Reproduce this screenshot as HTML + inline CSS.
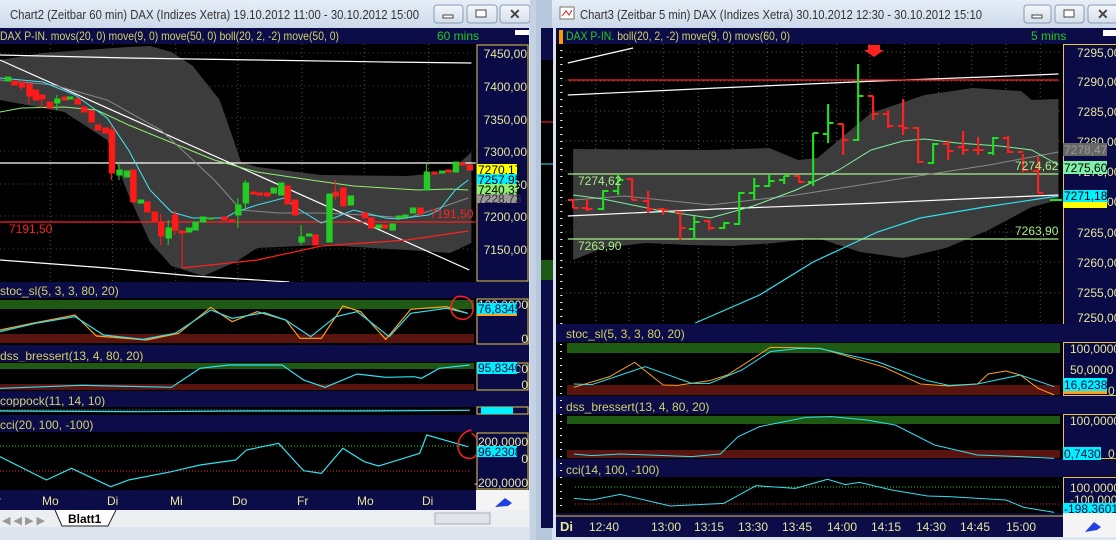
<!DOCTYPE html>
<html><head><meta charset="utf-8"><style>
html,body{margin:0;padding:0;width:1116px;height:540px;overflow:hidden;background:#d6e0ec;font-family:"Liberation Sans",sans-serif}
svg{position:absolute;left:0;top:0}
text{font-family:"Liberation Sans",sans-serif}
</style></head><body>
<svg width="1116" height="540" viewBox="0 0 1116 540">
<defs>
<linearGradient id="tb" x1="0" y1="0" x2="0" y2="1"><stop offset="0" stop-color="#e6eef8"/><stop offset="1" stop-color="#cdd9ea"/></linearGradient>
<linearGradient id="btn" x1="0" y1="0" x2="0" y2="1"><stop offset="0" stop-color="#f4f7fb"/><stop offset="1" stop-color="#d4deec"/></linearGradient>
</defs>
<rect x="0" y="0" width="1116" height="540" fill="#d8e2ee"/>

<!-- ============ LEFT WINDOW ============ -->
<rect x="0" y="0" width="536" height="28" fill="url(#tb)"/>
<text x="10" y="19" font-size="13" fill="#333" textLength="409" lengthAdjust="spacingAndGlyphs">Chart2 (Zeitbar 60 min)  DAX (Indizes Xetra) 19.10.2012 11:00 - 30.10.2012 15:00</text>
<rect x="434" y="5" width="29" height="18" rx="3" fill="url(#btn)" stroke="#8a9ab0"/>
<rect x="443" y="15" width="10" height="3" fill="#fff" stroke="#444" stroke-width="1"/>
<rect x="467" y="5" width="30" height="18" rx="3" fill="url(#btn)" stroke="#8a9ab0"/>
<rect x="476" y="10" width="10" height="7" fill="#fff" stroke="#444"/>
<rect x="500" y="5" width="30" height="18" rx="3" fill="url(#btn)" stroke="#8a9ab0"/>
<text x="509" y="19" font-size="14" fill="#444" font-weight="bold">✕</text>
<rect x="530" y="0" width="6" height="540" fill="#c4d2e4"/>

<rect x="0" y="28" width="529" height="16" fill="#0c0c48"/>
<text x="0" y="40" font-size="12" fill="#d2d26a" textLength="339" lengthAdjust="spacingAndGlyphs">DAX P-IN. movs(20, 0) move(9, 0) move(50, 0) boll(20, 2, -2) move(50, 0)</text>
<text x="437" y="40" font-size="12" fill="#22cc22">60 mins</text>
<rect x="515" y="30" width="14" height="5" fill="#fff"/>
<rect x="0" y="44" width="476" height="238" fill="#000"/>
<rect x="476" y="44" width="53" height="238" fill="#0a0a46"/>
<rect x="477" y="45" width="51" height="236" fill="none" stroke="#e8c840" stroke-width="1"/>
<g font-size="12" fill="#e6e69c" text-anchor="end">
<text x="527" y="58">7450,00</text><text x="527" y="91">7400,00</text><text x="527" y="124">7350,00</text><text x="527" y="156">7300,00</text><text x="527" y="189">7250,00</text><text x="527" y="221">7200,00</text><text x="527" y="254">7150,00</text>
</g>
<g transform="scale(1.0714 1)">
<g stroke="#3a5a3a" stroke-dasharray="1 3" stroke-width="1">
<line x1="47" y1="44" x2="47" y2="282"/><line x1="105" y1="44" x2="105" y2="282"/><line x1="164" y1="44" x2="164" y2="282"/><line x1="222" y1="44" x2="222" y2="282"/><line x1="282" y1="44" x2="282" y2="282"/><line x1="340" y1="44" x2="340" y2="282"/><line x1="400" y1="44" x2="400" y2="282"/>
<line x1="0" y1="53" x2="444" y2="53" stroke="#444"/><line x1="0" y1="86" x2="444" y2="86" stroke="#444"/><line x1="0" y1="118" x2="444" y2="118" stroke="#444"/><line x1="0" y1="151" x2="444" y2="151" stroke="#444"/><line x1="0" y1="184" x2="444" y2="184" stroke="#444"/><line x1="0" y1="216" x2="444" y2="216" stroke="#444"/><line x1="0" y1="249" x2="444" y2="249" stroke="#444"/>
</g>
<polygon fill="#3c3c3c" points="0,60 40,53 120,47 140,46 160,52 180,66 205,100 218,140 225,162 240,167 300,175 380,176 420,172 440,152 440,243 420,253 380,250 300,245 240,248 220,262 190,276 160,266 140,242 120,195 100,140 60,112 0,100"/>
<polyline fill="none" stroke="#fff" stroke-width="1.2" points="0,55 120,58 240,60 360,62 440,63"/>
<polyline fill="none" stroke="#fff" stroke-width="1.2" points="0,260 100,268 180,276 270,282"/>
<line x1="0" y1="163" x2="444" y2="163" stroke="#fff" stroke-width="1.2"/>
<line x1="0" y1="60" x2="438" y2="270" stroke="#fff" stroke-width="1.2"/>
<line x1="0" y1="222" x2="444" y2="222" stroke="#ff2020" stroke-width="1.2"/>
<polyline fill="none" stroke="#ff2020" stroke-width="1.2" points="170,268 240,260 300,246 380,240 437,231"/>
<polyline fill="none" stroke="#90ee70" stroke-width="1" points="0,112 20,108 60,107 90,110 120,125 200,160 240,172 290,180 330,186 390,190 420,189 437,190"/>
<polyline fill="none" stroke="#888" stroke-width="1" points="0,80 50,85 100,100 150,130 200,180 225,210 260,213 300,213 340,215 380,218 410,208 437,198"/>
<polyline fill="none" stroke="#40e0f0" stroke-width="1" points="0,78 40,82 70,95 100,118 120,150 140,190 160,212 180,218 210,218 220,212 240,205 265,198 280,210 300,223 330,210 360,218 372,219 385,217 400,215 410,210 425,190 437,180"/>
<g stroke-width="1">
<g fill="#ff1a1a" stroke="#ff1a1a">
<rect x="11" y="81" width="5" height="4"/><rect x="18" y="82" width="5" height="5"/><line x1="20" y1="82" x2="20" y2="90"/><rect x="25" y="84" width="5" height="12"/><line x1="27" y1="84" x2="27" y2="104"/><rect x="31" y="90" width="5" height="10"/><rect x="37" y="95" width="5" height="4"/><line x1="39" y1="95" x2="39" y2="108"/><rect x="44" y="102" width="5" height="6"/><rect x="58" y="97" width="5" height="3"/><rect x="70" y="99" width="5" height="5"/><rect x="76" y="107" width="5" height="5"/><rect x="83" y="111" width="5" height="11"/><rect x="89" y="125" width="5" height="5"/><rect x="96" y="128" width="5" height="5"/><rect x="102" y="130" width="5" height="43"/><line x1="104" y1="125" x2="104" y2="180"/><rect x="122" y="170" width="5" height="32"/><rect x="135" y="202" width="5" height="10"/><rect x="142" y="212" width="5" height="10"/><rect x="148" y="223" width="5" height="13"/><line x1="150" y1="214" x2="150" y2="245"/><rect x="161" y="215" width="5" height="15"/><line x1="163" y1="210" x2="163" y2="235"/><line x1="170" y1="232" x2="170" y2="268"/><rect x="167" y="231" width="6" height="2"/><rect x="207" y="217" width="5" height="3"/><rect x="214" y="220" width="5" height="2"/><rect x="234" y="192" width="5" height="2"/><rect x="240" y="193" width="5" height="2"/><rect x="247" y="193" width="5" height="3"/><rect x="266" y="186" width="5" height="18"/><rect x="273" y="200" width="5" height="15"/><rect x="292" y="235" width="5" height="10"/><rect x="311" y="192" width="5" height="4"/><line x1="313" y1="180" x2="313" y2="200"/><rect x="318" y="188" width="5" height="18"/><rect x="338" y="213" width="5" height="5"/><rect x="344" y="218" width="5" height="10"/><rect x="357" y="225" width="5" height="3"/><rect x="390" y="208" width="5" height="6"/><rect x="403" y="172" width="5" height="2"/><rect x="416" y="170" width="5" height="2"/><rect x="429" y="163" width="5" height="2"/><rect x="436" y="165" width="5" height="5"/>
</g>
<g fill="#22cc22" stroke="#22cc22">
<rect x="5" y="77" width="5" height="4"/><rect x="51" y="99" width="5" height="4"/><line x1="53" y1="95" x2="53" y2="110"/><rect x="63" y="97" width="5" height="2"/><rect x="109" y="170" width="5" height="5"/><line x1="111" y1="163" x2="111" y2="180"/><rect x="116" y="171" width="5" height="6"/><rect x="129" y="200" width="5" height="3"/><rect x="155" y="228" width="5" height="10"/><line x1="157" y1="220" x2="157" y2="245"/><rect x="174" y="228" width="5" height="4"/><rect x="180" y="222" width="5" height="8"/><rect x="187" y="217" width="5" height="5"/><rect x="194" y="218" width="5" height="1"/><rect x="220" y="205" width="5" height="10"/><line x1="222" y1="198" x2="222" y2="228"/><rect x="227" y="183" width="5" height="20"/><line x1="229" y1="180" x2="229" y2="210"/><rect x="253" y="188" width="5" height="5"/><rect x="260" y="183" width="5" height="12"/><rect x="279" y="237" width="5" height="5"/><line x1="281" y1="225" x2="281" y2="245"/><rect x="286" y="234" width="5" height="2"/><rect x="305" y="194" width="5" height="48"/><rect x="325" y="196" width="5" height="9"/><rect x="351" y="225" width="5" height="3"/><rect x="364" y="224" width="5" height="6"/><rect x="370" y="216" width="5" height="2"/><rect x="376" y="215" width="5" height="2"/><rect x="383" y="208" width="5" height="5"/><rect x="396" y="172" width="5" height="18"/><line x1="398" y1="163" x2="398" y2="190"/><rect x="410" y="171" width="5" height="2"/><rect x="423" y="162" width="5" height="10"/>
</g></g>
</g>
<text x="9" y="233" font-size="12" fill="#ff2020">7191,50</text>
<text x="430" y="218" font-size="12" fill="#ff2020">7191,50</text>
<rect x="477" y="164" width="40" height="11" fill="#ffff00"/><text x="478" y="174" font-size="12" fill="#000">7270,17</text>
<rect x="477" y="174" width="40" height="11" fill="#00f0ff"/><text x="478" y="184" font-size="12" fill="#000">7257,95</text>
<rect x="477" y="184" width="40" height="11" fill="#90ee70"/><text x="478" y="194" font-size="12" fill="#000">7240,33</text>
<rect x="477" y="194" width="40" height="9" fill="#999"/><text x="478" y="203" font-size="12" fill="#333">7228,73</text>

<rect x="0" y="282" width="529" height="208" fill="#0c0c48"/>
<g font-size="12" fill="#d2d26a"><text x="0" y="295">stoc_sl(5, 3, 3, 80, 20)</text><text x="0" y="360">dss_bressert(13, 4, 80, 20)</text><text x="0" y="405">coppock(11, 14, 10)</text><text x="0" y="429">cci(20, 100, -100)</text></g>
<rect x="0" y="298" width="476" height="47" fill="#000"/>
<rect x="0" y="300" width="474" height="9" fill="#1e5a14"/><rect x="0" y="334" width="474" height="9" fill="#5a1410"/>
<rect x="0" y="362" width="476" height="29" fill="#000"/>
<rect x="0" y="363" width="474" height="6" fill="#1e5a14"/><rect x="0" y="384" width="474" height="6" fill="#5a1410"/>
<rect x="0" y="407" width="476" height="8" fill="#000"/><line x1="0" y1="410" x2="470" y2="410" stroke="#555" stroke-dasharray="2 1"/>
<rect x="0" y="432" width="476" height="58" fill="#000"/>
<line x1="0" y1="446" x2="470" y2="446" stroke="#22dd22" stroke-dasharray="1 2"/>
<line x1="0" y1="471" x2="470" y2="471" stroke="#ff2020" stroke-dasharray="1 2"/>
<g transform="translate(0 280) scale(0.35714 0.33333)" fill="none" stroke-width="1.2">
<polyline vector-effect="non-scaling-stroke" stroke="#ffa020" points="0,150 90,130 210,105 270,168 410,180 500,160 590,82 650,125 720,95 800,120 840,175 900,175 960,78 1010,95 1080,178 1150,88 1250,80 1310,100"/>
<polyline vector-effect="non-scaling-stroke" stroke="#30e0f0" points="0,155 100,130 210,110 290,165 400,178 490,160 590,90 650,115 740,98 800,120 870,170 940,110 1000,95 1090,170 1150,100 1250,85 1310,100"/>
<polyline vector-effect="non-scaling-stroke" stroke="#30e0f0" points="0,325 230,316 480,322 560,265 640,255 790,255 850,300 910,322 1000,282 1080,292 1160,290 1180,295 1230,265 1315,255"/>
<polyline vector-effect="non-scaling-stroke" stroke="#30e0f0" points="0,393 400,395 700,393 1000,393 1315,391"/>
<polyline vector-effect="non-scaling-stroke" stroke="#30e0f0" points="0,530 130,600 200,565 310,620 360,600 480,575 560,555 660,540 690,510 780,490 850,572 900,580 960,505 1020,545 1060,558 1130,535 1175,520 1195,465 1310,500"/>
<path vector-effect="non-scaling-stroke" stroke="#ff2020" stroke-width="1.5" d="M1280,50 C1330,40 1340,110 1300,118 C1260,120 1250,70 1280,50"/>
<path vector-effect="non-scaling-stroke" stroke="#ff2020" stroke-width="1.5" d="M1320,450 C1270,460 1270,540 1320,535 C1345,530 1345,470 1320,460"/>
</g>
<rect x="476" y="298" width="53" height="47" fill="#0a0a46"/><rect x="477" y="299" width="51" height="45" fill="none" stroke="#e8c840"/>
<rect x="476" y="362" width="53" height="29" fill="#0a0a46"/><rect x="477" y="363" width="51" height="27" fill="none" stroke="#e8c840"/>
<rect x="476" y="407" width="53" height="8" fill="#0a0a46"/><rect x="477" y="407" width="51" height="7" fill="none" stroke="#e8c840"/>
<rect x="476" y="432" width="53" height="58" fill="#0a0a46"/><rect x="477" y="433" width="51" height="56" fill="none" stroke="#e8c840"/>
<g font-size="12" fill="#e6e69c" text-anchor="end"><text x="528" y="309">100,0000</text><text x="528" y="343">0</text><text x="528" y="373">100</text><text x="528" y="389">0</text><text x="528" y="446">200,0000</text><text x="528" y="463">0</text><text x="528" y="487">-200,0000</text></g>
<rect x="477" y="306" width="40" height="10" fill="#ffa020"/><rect x="477" y="303" width="40" height="11" fill="#00f0ff"/><text x="478" y="313" font-size="12" fill="#0a0a46">76,8345</text>
<rect x="477" y="362" width="40" height="12" fill="#00f0ff"/><text x="478" y="372" font-size="12" fill="#0a0a46">95,8346</text>
<rect x="481" y="407" width="32" height="7" fill="#00f0ff"/>
<rect x="477" y="446" width="40" height="11" fill="#00f0ff"/><text x="478" y="456" font-size="12" fill="#0a0a46">96,2308</text>
<rect x="0" y="490" width="476" height="20" fill="#0c0c48"/>
<g font-size="12" fill="#e6e69c"><text x="-3" y="505">r</text><text x="42" y="505">Mo</text><text x="107" y="505">Di</text><text x="170" y="505">Mi</text><text x="232" y="505">Do</text><text x="297" y="505">Fr</text><text x="357" y="505">Mo</text><text x="422" y="505">Di</text></g>
<rect x="476" y="490" width="53" height="20" fill="#f4f4f4"/>
<path d="M495,507 L505,498 L512,503 L508,506 Z" fill="#2040e0"/>
<rect x="0" y="510" width="529" height="17" fill="#eceef2"/>
<text x="2" y="524" font-size="11" fill="#999">◀ ◀ ▶ ▶</text>
<path d="M55,510 L62,526 L108,526 L116,510" fill="#fff" stroke="#222"/>
<text x="68" y="523" font-size="12" font-weight="bold" fill="#000">Blatt1</text>
<rect x="435" y="513" width="55" height="11" fill="#e0e4ea" stroke="#aab"/>
<rect x="0" y="527" width="529" height="13" fill="#dbe4ef"/>
<rect x="536" y="0" width="16" height="540" fill="#b7c7dc"/>
<rect x="541" y="28" width="12" height="500" fill="#0c0c48"/>
<rect x="541" y="60" width="12" height="200" fill="#000"/>
<line x1="541" y1="122" x2="553" y2="122" stroke="#ff2020"/>
<line x1="541" y1="164" x2="553" y2="164" stroke="#30e0f0"/>
<rect x="541" y="260" width="12" height="20" fill="#1e5a14"/>

<!-- ============ RIGHT WINDOW ============ -->
<rect x="552" y="0" width="564" height="28" fill="url(#tb)"/>
<rect x="560" y="7" width="14" height="12" fill="#fff" stroke="#776"/><path d="M562,16 L566,11 L569,15 L572,10" stroke="#d02020" fill="none"/>
<text x="580" y="19" font-size="13" fill="#333" textLength="402" lengthAdjust="spacingAndGlyphs">Chart3 (Zeitbar 5 min)  DAX (Indizes Xetra) 30.10.2012 12:30 - 30.10.2012 15:10</text>
<rect x="1024" y="5" width="27" height="18" rx="3" fill="url(#btn)" stroke="#8a9ab0"/>
<rect x="1032" y="15" width="10" height="3" fill="#fff" stroke="#444"/>
<rect x="1055" y="5" width="29" height="18" rx="3" fill="url(#btn)" stroke="#8a9ab0"/>
<rect x="1064" y="10" width="10" height="7" fill="#fff" stroke="#444"/>
<rect x="1088" y="5" width="30" height="18" rx="3" fill="url(#btn)" stroke="#8a9ab0"/>
<text x="1097" y="19" font-size="14" fill="#444" font-weight="bold">✕</text>

<rect x="556" y="28" width="560" height="16" fill="#0c0c48"/>
<rect x="559" y="30" width="4" height="14" fill="#ff9a00"/>
<text x="566" y="40" font-size="12" textLength="224" lengthAdjust="spacingAndGlyphs"><tspan fill="#22cc22">DAX P-IN. </tspan><tspan fill="#d2d26a">boll(20, 2, -2) move(9, 0) movs(60, 0)</tspan></text>
<text x="1031" y="40" font-size="12" fill="#22cc22">5 mins</text>
<rect x="1103" y="30" width="13" height="6" fill="#fff"/>
<rect x="556" y="44" width="507" height="280" fill="#000"/>
<rect x="1063" y="44" width="53" height="280" fill="#0a0a46"/>
<line x1="1063.5" y1="44" x2="1063.5" y2="324" stroke="#e8c840"/><line x1="1063" y1="44.5" x2="1116" y2="44.5" stroke="#e8c840"/>
<g font-size="12" fill="#e6e69c"><text x="1077" y="57">7295,00</text><text x="1077" y="86">7290,00</text><text x="1077" y="116">7285,00</text><text x="1077" y="146">7280,00</text><text x="1077" y="176">7275,00</text><text x="1077" y="206">7270,00</text><text x="1077" y="237">7265,00</text><text x="1077" y="267">7260,00</text><text x="1077" y="297">7255,00</text><text x="1077" y="322">7250,00</text></g>
<g transform="translate(556 0) scale(1.0714 1)">
<g stroke="#555" stroke-dasharray="1 3">
<line x1="5" y1="52" x2="471" y2="52"/><line x1="5" y1="81" x2="471" y2="81"/><line x1="5" y1="111" x2="471" y2="111"/><line x1="5" y1="141" x2="471" y2="141"/><line x1="5" y1="171" x2="471" y2="171"/><line x1="5" y1="201" x2="471" y2="201"/><line x1="5" y1="232" x2="471" y2="232"/><line x1="5" y1="262" x2="471" y2="262"/><line x1="5" y1="293" x2="471" y2="293"/>
<line x1="37" y1="44" x2="37" y2="324"/><line x1="68" y1="44" x2="68" y2="324"/><line x1="100" y1="44" x2="100" y2="324"/><line x1="133" y1="44" x2="133" y2="324"/><line x1="165" y1="44" x2="165" y2="324"/><line x1="197" y1="44" x2="197" y2="324"/><line x1="230" y1="44" x2="230" y2="324"/><line x1="262" y1="44" x2="262" y2="324"/><line x1="293" y1="44" x2="293" y2="324"/><line x1="325" y1="44" x2="325" y2="324"/><line x1="357" y1="44" x2="357" y2="324"/><line x1="388" y1="44" x2="388" y2="324"/><line x1="420" y1="44" x2="420" y2="324"/><line x1="452" y1="44" x2="452" y2="324"/>
</g>
<g fill="none" stroke="#fff" stroke-dasharray="1 6" stroke-width="2"><line x1="5" y1="50" x2="5" y2="324"/></g>
<polygon fill="#3c3c3c" points="16,149 144,150 199,148 226,160 244,158 264,140 294,113 344,95 389,88 434,91 444,100 469,99 469,200 444,207 404,230 364,248 324,258 284,252 244,238 204,243 164,246 124,245 84,243 44,248 16,260"/>
<polyline fill="none" stroke="#fff" stroke-width="1.2" points="11,63 72,48"/>
<polyline fill="none" stroke="#fff" stroke-width="1.2" points="11,95 150,88 300,81 400,77 469,74"/>
<line x1="11" y1="80" x2="469" y2="80" stroke="#ff2020" stroke-width="1.2"/>
<polyline fill="none" stroke="#fff" stroke-width="1.2" points="11,216 150,209 300,203 400,198 469,195"/>
<polyline fill="none" stroke="#30e0f0" stroke-width="1.2" points="130,323 190,295 240,262 300,232 340,218 400,207 469,196"/>
<line x1="11" y1="174" x2="469" y2="174" stroke="#a8f08a" stroke-width="1.2"/>
<line x1="11" y1="239" x2="469" y2="239" stroke="#a8f08a" stroke-width="1.2"/>
<polyline fill="none" stroke="#888" stroke-width="1" points="16,200 64,196 144,205 224,195 284,185 344,175 404,165 469,152"/>
<polyline fill="none" stroke="#80f0a0" stroke-width="1" points="16,195 44,199 94,210 144,218 184,206 224,190 264,170 294,150 324,141 344,139 374,143 414,146 444,150 469,165"/>
<g stroke-width="2" fill="none">
<g stroke="#ff2020">
<path d="M16,199V208M11,200H16M16,208H21"/><path d="M29,199V211M24,208H29M29,209H34"/><path d="M71,178V200M66,179H71M71,200H76"/><path d="M86,191V213M81,201H86M86,209H91"/><path d="M100,208V215M95,209H100M100,210H105"/><path d="M116,211V240M111,212H116M116,228H121"/><path d="M143,220V230M138,221H143M143,228H148"/><path d="M227,176V183M222,176H227M227,182H232"/><path d="M268,124V155M263,124H268M268,140H273"/><path d="M296,96V120M291,96H296M296,114H301"/><path d="M310,110V128M305,114H310M310,126H315"/><path d="M324,99V135M319,126H324M324,128H329"/><path d="M338,127V163M333,128H338M338,162H343"/><path d="M366,140V160M361,144H366M366,151H371"/><path d="M380,131V155M375,147H380M380,150H385"/><path d="M394,137V155M389,150H394M394,150H399"/><path d="M422,136V153M417,138H422M422,152H427"/><path d="M436,154V172M431,152H436M436,170H441"/><path d="M450,157V193M445,171H450M450,193H455"/>
</g>
<g stroke="#22dd22">
<path d="M44,190V210M39,209H44M44,191H49"/><path d="M58,174V195M53,191H58M58,180H63"/><path d="M129,216V240M124,229H129M129,222H134"/><path d="M157,222V229M152,228H157M157,223H162"/><path d="M171,192V225M166,224H171M171,193H176"/><path d="M185,178V200M180,193H185M185,186H190"/><path d="M199,175V187M194,186H199M199,181H204"/><path d="M213,176V184M208,180H213M213,176H218"/><path d="M240,133V186M235,182H240M240,133H245"/><path d="M254,104V143M249,134H254M254,123H259"/><path d="M282,64V141M277,140H282M282,96H287"/><path d="M352,143V164M347,163H352M352,144H357"/><path d="M408,137V155M403,153H408M408,138H413"/>
</g></g>
</g>
<path d="M868,45 H880 V50 H884 L874,57 L864,50 H868 Z" fill="#ff2020"/>
<g font-size="12" fill="#a8f08a"><text x="578" y="185">7274,62</text><text x="578" y="250">7263,90</text><text x="1015" y="170">7274,62</text><text x="1015" y="235">7263,90</text></g>
<rect x="1063" y="143" width="44" height="13" fill="#666"/><text x="1064" y="154" font-size="12" fill="#999">7278,47</text>
<rect x="1063" y="161" width="44" height="13" fill="#7ff0a8"/><text x="1064" y="172" font-size="12" fill="#000">7275,60</text>
<rect x="1063" y="190" width="44" height="12" fill="#00f0ff"/><text x="1064" y="200" font-size="12" fill="#000">7271,18</text>
<rect x="1063" y="202" width="44" height="6" fill="#ffff00"/>
<rect x="1050" y="199" width="12" height="2" fill="#22dd22"/>

<rect x="556" y="324" width="560" height="193" fill="#0c0c48"/>
<g font-size="12" fill="#d2d26a"><text x="566" y="338">stoc_sl(5, 3, 3, 80, 20)</text><text x="566" y="411">dss_bressert(13, 4, 80, 20)</text><text x="566" y="474">cci(14, 100, -100)</text></g>
<rect x="556" y="342" width="507" height="54" fill="#000"/>
<rect x="567" y="343" width="493" height="10" fill="#1e5a14"/><rect x="567" y="385" width="493" height="10" fill="#5a1410"/>
<rect x="556" y="414" width="507" height="45" fill="#000"/>
<rect x="567" y="416" width="493" height="8" fill="#1e5a14"/><rect x="567" y="450" width="493" height="8" fill="#5a1410"/>
<rect x="556" y="477" width="507" height="36" fill="#000"/>
<line x1="575" y1="487" x2="1060" y2="487" stroke="#22dd22" stroke-dasharray="1 2"/>
<line x1="575" y1="504" x2="1060" y2="504" stroke="#ff2020" stroke-dasharray="1 2"/>
<g transform="translate(556 280) scale(0.35714 0.33333)" fill="none">
<polyline vector-effect="non-scaling-stroke" stroke="#ffa020" points="50,322 150,290 220,247 300,315 340,316 430,302 480,285 600,202 660,203 740,205 920,262 1020,312 1100,318 1180,312 1210,282 1260,273 1300,285 1350,325 1395,345"/>
<polyline vector-effect="non-scaling-stroke" stroke="#30e0f0" points="50,312 100,314 250,260 380,310 430,310 520,270 600,215 680,205 740,206 900,245 1040,302 1100,316 1180,312 1300,285 1395,320"/>
<polyline vector-effect="non-scaling-stroke" stroke="#30e0f0" points="50,522 100,527 180,522 380,530 460,522 510,470 570,440 700,412 770,410 870,420 950,435 1060,495 1180,525 1300,530 1395,535"/>
<polyline vector-effect="non-scaling-stroke" stroke="#30e0f0" points="50,655 100,660 180,643 320,678 470,670 560,617 670,625 760,598 810,614 850,607 940,630 1040,648 1100,650 1260,660 1310,682 1395,697"/>
</g>
<g stroke="#fff" stroke-dasharray="1 6" stroke-width="2"><line x1="561" y1="344" x2="561" y2="512"/></g>
<rect x="1063" y="342" width="53" height="54" fill="#0a0a46"/><rect x="1063.5" y="342.5" width="53" height="53" fill="none" stroke="#e8c840"/>
<rect x="1063" y="414" width="53" height="45" fill="#0a0a46"/><rect x="1063.5" y="414.5" width="53" height="44" fill="none" stroke="#e8c840"/>
<rect x="1063" y="477" width="53" height="36" fill="#0a0a46"/><rect x="1063.5" y="477.5" width="53" height="35" fill="none" stroke="#e8c840"/>
<g font-size="12" fill="#e6e69c"><text x="1070" y="353">100,0000</text><text x="1070" y="374">50,0000</text><text x="1108" y="395">0</text><text x="1070" y="425">100,0000</text><text x="1108" y="458">0</text><text x="1070" y="492">100,0000</text><text x="1070" y="504">-100,0000</text></g>
<rect x="1063" y="381" width="44" height="13" fill="#ffa020"/><rect x="1063" y="378" width="44" height="13" fill="#00f0ff"/><text x="1064" y="389" font-size="12" fill="#0a0a46">16,6238</text>
<rect x="1063" y="447" width="38" height="13" fill="#00f0ff"/><text x="1064" y="458" font-size="12" fill="#0a0a46">0,7430</text>
<rect x="1063" y="503" width="53" height="13" fill="#00f0ff"/><text x="1064" y="513" font-size="12" fill="#0a0a46">-198,3601</text>
<rect x="556" y="513" width="507" height="24" fill="#0c0c48"/>
<line x1="556" y1="516" x2="1063" y2="516" stroke="#e8c840"/>
<g font-size="12" fill="#e6e69c"><text x="560" y="531" font-weight="bold" font-size="13">Di</text><text x="589" y="531">12:40</text><text x="651" y="531">13:00</text><text x="694" y="531">13:15</text><text x="738" y="531">13:30</text><text x="782" y="531">13:45</text><text x="827" y="531">14:00</text><text x="871" y="531">14:15</text><text x="916" y="531">14:30</text><text x="960" y="531">14:45</text><text x="1006" y="531">15:00</text></g>
<rect x="1063" y="513" width="53" height="24" fill="#f4f4f4"/>
<path d="M1085,532 L1094,522 L1101,527 L1097,530 Z" fill="#2040e0"/>
<rect x="556" y="537" width="560" height="3" fill="#dbe4ef"/>
</svg>
</body></html>
